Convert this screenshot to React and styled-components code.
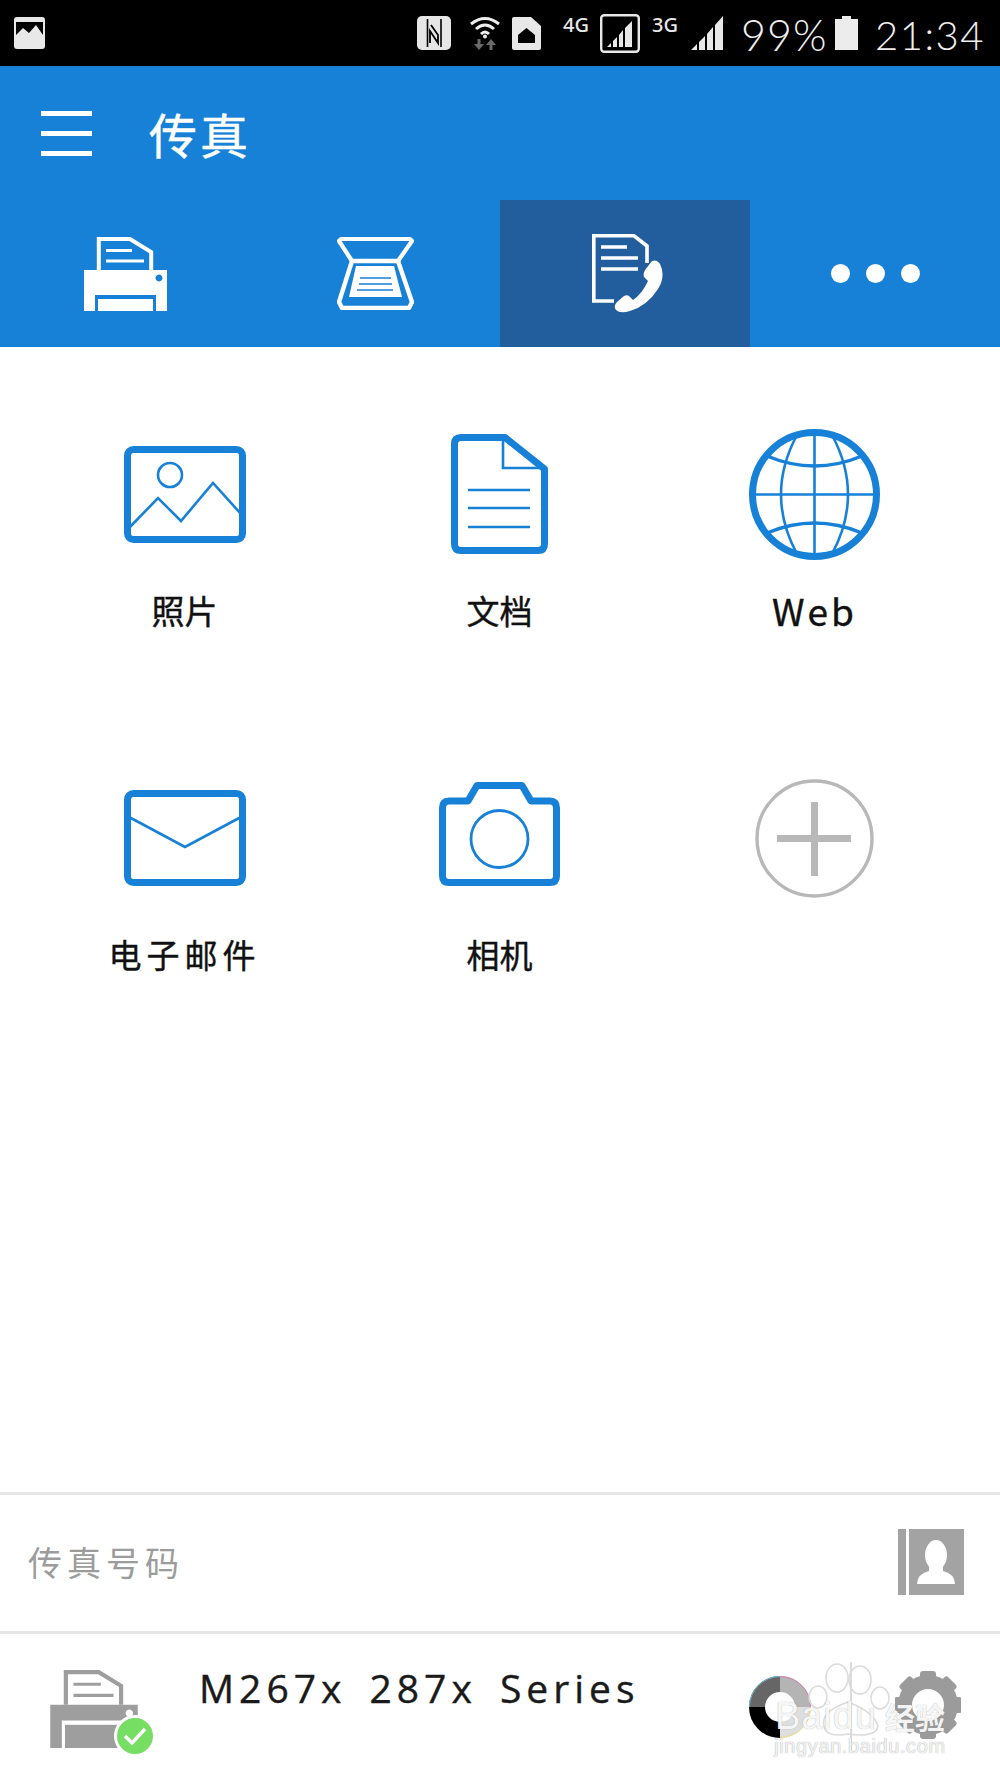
import React from "react";
import styled, { createGlobalStyle } from "styled-components";

const BLUE = "#1781d8";
const CJK = `"Noto Sans CJK SC", "Noto Sans", sans-serif`;

const Global = createGlobalStyle`
  html, body { margin: 0; padding: 0; background: #fff; }
  * { box-sizing: border-box; }
`;

const Page = styled.div`
  width: 1000px;
  height: 1778px;
  display: flex;
  flex-direction: column;
  background: #fff;
  overflow: hidden;
  position: relative;
  font-family: ${CJK};
`;

/* ---------- status bar ---------- */
const StatusBar = styled.div`
  height: 66px;
  flex: none;
  background: #000;
  display: flex;
  align-items: center;
  padding: 0 15px 0 14px;
`;
const StatusSpacer = styled.div`
  flex: 1;
`;
const StatusSlot = styled.div`
  flex: none;
  display: flex;
  margin-left: ${(p) => p.$ml || 0}px;
`;
const NetText = styled.span`
  flex: none;
  width: ${(p) => p.$w}px;
  margin-left: ${(p) => p.$ml}px;
  margin-bottom: 16px;
  font: 500 20px/20px "Noto Sans", sans-serif;
  color: #e8e8e8;
  white-space: nowrap;
`;
const ClockText = styled.span`
  flex: none;
  width: ${(p) => p.$w}px;
  margin-left: ${(p) => p.$ml}px;
  margin-top: 4px;
  font: 300 ${(p) => p.$fs}px/44px Lato, sans-serif;
  letter-spacing: ${(p) => p.$ls}px;
  color: #efefef;
  white-space: nowrap;
`;

/* ---------- header ---------- */
const TitleBar = styled.header`
  height: 134px;
  flex: none;
  background: ${BLUE};
  display: flex;
  align-items: center;
  padding-left: 41px;
`;
const Burger = styled.div`
  width: 51px;
  height: 45px;
  display: flex;
  flex-direction: column;
  justify-content: space-between;
`;
const BurgerLine = styled.span`
  display: block;
  height: 5px;
  background: #fff;
`;
const Title = styled.h1`
  margin: 0 0 0 57px;
  font: 400 48px/60px ${CJK};
  letter-spacing: 3px;
  color: #fff;
  -webkit-text-stroke: 0.5px #fff;
`;
const Tabs = styled.nav`
  height: 147px;
  flex: none;
  background: ${BLUE};
  display: grid;
  grid-template-columns: repeat(4, 250px);
`;
const Tab = styled.div`
  display: flex;
  align-items: center;
  justify-content: center;
  padding: 0 0 ${(p) => p.$pb || 0}px ${(p) => p.$pl || 0}px;
  background: ${(p) => (p.$active ? "#225e9e" : "transparent")};
`;
const Dots = styled.div`
  display: flex;
  gap: 16px;
`;
const Dot = styled.span`
  width: 19px;
  height: 19px;
  border-radius: 50%;
  background: #fff;
`;

/* ---------- function grid ---------- */
const Main = styled.main`
  flex: 1;
  padding: 82px 28px 0 27px;
`;
const Grid = styled.div`
  display: grid;
  grid-template-columns: repeat(3, 315px);
  grid-auto-rows: 344px;
`;
const Cell = styled.div`
  display: flex;
  flex-direction: column;
  align-items: center;
`;
const IconBox = styled.div`
  height: 130px;
  display: flex;
  align-items: center;
  justify-content: center;
`;
const Label = styled.div`
  margin-top: 30px;
  font: 400 ${(p) => p.$fs || 33}px/42px ${CJK};
  letter-spacing: ${(p) => p.$ls || 0}px;
  color: #111;
  white-space: nowrap;
  -webkit-text-stroke: 0.4px #111;
`;

/* ---------- bottom rows ---------- */
const FaxRow = styled.section`
  height: 139px;
  flex: none;
  border-top: 3px solid #e6e6e6;
  display: flex;
  align-items: center;
  justify-content: space-between;
  padding: 0 36px 2px 28px;
`;
const FaxLabel = styled.div`
  font: 400 34px/46px ${CJK};
  letter-spacing: 5px;
  color: #9c9c9c;
`;
const DeviceRow = styled.section`
  height: 147px;
  flex: none;
  border-top: 3px solid #e6e6e6;
  display: flex;
  align-items: flex-start;
  padding: 36px 39px 0 50px;
`;
const PrinterWrap = styled.div`
  position: relative;
  width: 88px;
  height: 78px;
  flex: none;
`;
const CheckBadge = styled.div`
  position: absolute;
  left: 64px;
  top: 45px;
  width: 42px;
  height: 42px;
  border-radius: 50%;
  background: #76de62;
  border: 3px solid #fff;
  display: flex;
  align-items: center;
  justify-content: center;
`;
const DeviceName = styled.div`
  flex: 1;
  margin: -7px 0 0 61px;
  font: 400 39px/50px "Open Sans", sans-serif;
  letter-spacing: 5px;
  word-spacing: 8px;
  color: #1a1a1a;
  white-space: nowrap;
  -webkit-text-stroke: 0.4px #1a1a1a;
`;
const InkSlot = styled.div`
  flex: none;
  margin: 6px 84px 0 0;
  display: flex;
`;
const GearSlot = styled.div`
  flex: none;
  margin-top: 1px;
  display: flex;
`;

/* ---------- watermark over the corner ---------- */
const Watermark = styled.div`
  position: absolute;
  left: 760px;
  top: 1660px;
  width: 200px;
  height: 100px;
  display: flex;
  flex-direction: column;
  align-items: center;
`;
const PawArt = styled.svg`
  position: absolute;
  left: 0;
  top: 0;
`;
const MarkLine = styled.div`
  position: relative;
  margin-top: 36px;
  display: flex;
  align-items: center;
  gap: 8px;
  color: rgba(255, 255, 255, 0.92);
  text-shadow: 0 0 1px rgba(120, 120, 120, 0.7);
`;
const MarkBaidu = styled.span`
  font: 400 38px/40px "Liberation Sans", sans-serif;
  letter-spacing: 1px;
`;
const MarkJy = styled.span`
  font: 700 30px/40px ${CJK};
`;
const MarkUrl = styled.div`
  position: relative;
  margin-top: -1px;
  font: 400 20px/22px "Liberation Sans", sans-serif;
  letter-spacing: 0.6px;
  color: rgba(255, 255, 255, 0.9);
  text-shadow: 0 0 1px rgba(110, 110, 110, 0.8);
`;

/* ---------- drawings ---------- */
const GalleryGlyph = () => (
  <svg width="31" height="32" viewBox="0 0 31 32">
    <rect x="0" y="0" width="31" height="32" rx="3" fill="#e8e8e8" />
    <rect x="2" y="5" width="27" height="13" fill="#000" />
    <path d="M2 18 L9 11 L15 16 L22 8 L29 18Z" fill="#e8e8e8" />
  </svg>
);
const NfcGlyph = () => (
  <svg width="34" height="34" viewBox="0 0 34 34">
    <rect width="34" height="34" rx="5" fill="#e6e6e6" />
    <path d="M10.5 3 V31 M24 3 V31" stroke="#000" strokeWidth="1.6" fill="none" />
    <path d="M14 9 L21 19 V27 L13 15 V27" stroke="#000" strokeWidth="1.8" fill="none" />
  </svg>
);
const WifiGlyph = () => (
  <svg width="30" height="34" viewBox="0 0 30 34">
    <path d="M1 8 Q15 -3 29 8" stroke="#eee" strokeWidth="3" fill="none" />
    <path d="M6 13 Q15 5 24 13" stroke="#eee" strokeWidth="3" fill="none" />
    <path d="M11 18 Q15 14 19 18" stroke="#eee" strokeWidth="3" fill="none" />
    <circle cx="15" cy="20.5" r="2" fill="#eee" />
    <path d="M9 34 L4 28 H7.5 V23 H10.5 V28 H14Z" fill="#6a6a6a" />
    <path d="M21 23 L26 29 H22.5 V34 H19.5 V29 H16Z" fill="#6a6a6a" />
  </svg>
);
const SimGlyph = () => (
  <svg width="29" height="33" viewBox="0 0 29 33">
    <path d="M2 0 H19 L29 9 V31 Q29 33 27 33 H2 Q0 33 0 31 V2 Q0 0 2 0Z" fill="#e8e8e8" />
    <path d="M14.5 11 L23 18 V26 H6 V18Z" fill="#000" />
  </svg>
);
const BarsFill = () => (
  <svg width="34" height="34" viewBox="0 0 34 34">
    <path d="M1 34 L7 28 V34Z M9 34 V26 L15 20 V34Z M17 34 V18 L23 11 V34Z M25 34 V9 L33 0 V34Z" fill="#e8e8e8" />
  </svg>
);
const SignalBox = () => (
  <svg width="40" height="39" viewBox="0 0 40 39">
    <rect x="1.2" y="1.2" width="37.6" height="36.6" rx="3" fill="none" stroke="#e8e8e8" strokeWidth="2.4" />
    <path d="M7 33 L11 29 V33Z M13 33 V27 L17 23 V33Z M19 33 V21 L23 16 V33Z M25 33 V14 L32 7 V33Z" fill="#e8e8e8" />
  </svg>
);
const Battery = () => (
  <svg width="23" height="34" viewBox="0 0 23 34">
    <path d="M7 0 H16 V3 H23 V34 H0 V3 H7Z" fill="#ececec" />
  </svg>
);

const Printer = ({ color, w, h, notch = 58, sheet = 62 }) => (
  <svg width={w} height={h} viewBox="0 0 83 74">
    <path d="M14.8 33 V2 H46 L67.2 15 V33" fill="none" stroke={color} strokeWidth="4" />
    <path d="M22 13.5 H48 M22 24 H60" stroke={color} strokeWidth="3" />
    <path fillRule="evenodd" d={`M0 33 H83 V74 H72 V${notch} H11 V74 H0Z M75 37.5 a3.5 3.5 0 1 0 0.01 0Z`} fill={color} />
    <rect x="14" y={sheet} width="55" height={74 - sheet} fill={color} />
  </svg>
);
const Scanner = () => (
  <svg width="77" height="74" viewBox="0 0 77 74">
    <path d="M4 3 H73 L75 5 L61 25 H15 L2 5Z" fill="none" stroke="#fff" strokeWidth="4.2" strokeLinejoin="round" />
    <path d="M15 25 H61 L75 66 L72 72 H5 L2 66Z" fill="none" stroke="#fff" strokeWidth="4.4" strokeLinejoin="round" />
    <path d="M19 30 H57 L65 61 H12Z" fill="#fff" />
    <path d="M23 42 H54 M22 48 H55 M20 54 H56" stroke={BLUE} strokeWidth="1.7" />
  </svg>
);
const FaxDoc = () => (
  <svg width="71" height="79" viewBox="0 0 71 79">
    <path d="M22 67 H1.8 V1.8 H42 L55 12 V29" fill="none" stroke="#fff" strokeWidth="3.6" />
    <path d="M9 13 H35 M9 24 H46 M9 35 H46" stroke="#fff" strokeWidth="3.5" />
    <path d="M60 27 Q65 25 68 30 Q74 42 66 55 Q55 72 38 77 Q28 80 24 76 Q21 72 25 68 L32 62 Q36 60 38 63 L41 66 Q50 60 56 47 L52 43 Q51 40 53 36Z" fill="#fff" />
  </svg>
);

const PhotoIcon = () => (
  <svg width="122" height="97" viewBox="0 0 122 97">
    <rect x="3.5" y="3.5" width="115" height="90" rx="6" fill="none" stroke={BLUE} strokeWidth="7" />
    <circle cx="46" cy="29" r="12" fill="none" stroke={BLUE} strokeWidth="2.6" />
    <path d="M5 82 L34 52 L57 75 L89 37 L117 68" fill="none" stroke={BLUE} strokeWidth="2.6" />
  </svg>
);
const DocIcon = () => (
  <svg width="97" height="120" viewBox="0 0 97 120">
    <path d="M10 3.5 H54 L93.5 35 V110 Q93.5 116.5 87 116.5 H10 Q3.5 116.5 3.5 110 V10 Q3.5 3.5 10 3.5Z" fill="none" stroke={BLUE} strokeWidth="7" strokeLinejoin="round" />
    <path d="M52 4 V34 H92" fill="none" stroke={BLUE} strokeWidth="2.6" />
    <path d="M17 56 H79 M17 74 H79 M17 93 H79" stroke={BLUE} strokeWidth="2.6" />
  </svg>
);
const GlobeIcon = () => (
  <svg width="131" height="131" viewBox="0 0 131 131">
    <circle cx="65.5" cy="65.5" r="62" fill="none" stroke={BLUE} strokeWidth="7" />
    <g fill="none" stroke={BLUE} strokeWidth="2.6">
      <path d="M65.5 4 V127 M4 65.5 H127" />
      <path d="M48 6 Q16 65.5 48 125 M83 6 Q115 65.5 83 125" />
      <path d="M18 27 Q65.5 47 113 27 M18 104 Q65.5 84 113 104" strokeWidth="3.4" />
    </g>
  </svg>
);
const MailIcon = () => (
  <svg width="122" height="96" viewBox="0 0 122 96">
    <rect x="3.5" y="3.5" width="115" height="89" rx="6" fill="none" stroke={BLUE} strokeWidth="7" />
    <path d="M5 27 L61 57 L117 27" fill="none" stroke={BLUE} strokeWidth="2.6" />
  </svg>
);
const CameraIcon = () => (
  <svg width="121" height="112" viewBox="0 0 121 112">
    <path d="M38 3.5 H83 L92 19 H111 Q117.5 19 117.5 26 V94 Q117.5 100.5 111 100.5 H10 Q3.5 100.5 3.5 94 V26 Q3.5 19 10 19 H29Z" fill="none" stroke={BLUE} strokeWidth="7" strokeLinejoin="round" />
    <circle cx="60.5" cy="57" r="28.5" fill="none" stroke={BLUE} strokeWidth="2.8" />
  </svg>
);
const AddIcon = () => (
  <svg width="119" height="119" viewBox="0 0 119 119">
    <circle cx="59.5" cy="59.5" r="57.5" fill="none" stroke="#b8b8b8" strokeWidth="3.4" />
    <path d="M22 59.5 H96 M59.5 23 V97" stroke="#b8b8b8" strokeWidth="7" />
  </svg>
);
const ContactIcon = () => (
  <svg width="66" height="66" viewBox="0 0 66 66">
    <rect x="0" y="0" width="8" height="66" fill="#a3a3a3" />
    <rect x="11" y="0" width="55" height="66" fill="#a3a3a3" />
    <ellipse cx="38" cy="26" rx="11" ry="15" fill="#fff" />
    <path d="M31 36 V42 Q19 45 19 55 H57 Q57 45 45 42 V36Z" fill="#fff" />
  </svg>
);
const InkIcon = () => (
  <svg width="62" height="62" viewBox="0 0 62 62">
    <g fill="none" strokeWidth="16">
      <path d="M8 31 A23 23 0 0 1 31 8" stroke="#666" />
      <path d="M31 8 A23 23 0 0 1 54 31" stroke="#b4b4b4" />
      <path d="M54 31 A23 23 0 0 1 31 54" stroke="#dedede" />
      <path d="M31 54 A23 23 0 0 1 8 31" stroke="#000" />
    </g>
    <g fill="none" strokeWidth="1">
      <path d="M0.5 31 A30.5 30.5 0 0 1 31 0.5" stroke="#6ab7d0" />
      <path d="M31 0.5 A30.5 30.5 0 0 1 61.5 31" stroke="#d77fb5" />
      <path d="M61.5 31 A30.5 30.5 0 0 1 31 61.5" stroke="#ecdf7c" />
    </g>
  </svg>
);
const GearIcon = () => (
  <svg width="66" height="68" viewBox="0 0 66 68">
    <g fill="#9b9b9b">
      {[0, 45, 90, 135, 180, 225, 270, 315].map((a) => (
        <rect key={a} x="25" y="0" width="16" height="16" rx="3" transform={`rotate(${a} 33 34)`} />
      ))}
    </g>
    <circle cx="33" cy="34" r="23" fill="none" stroke="#9b9b9b" strokeWidth="14" />
  </svg>
);

const items = [
  { label: "照片", icon: <PhotoIcon /> },
  { label: "文档", icon: <DocIcon /> },
  { label: "Web", icon: <GlobeIcon />, ls: 3, fs: 37 },
  { label: "电子邮件", icon: <MailIcon />, ls: 5 },
  { label: "相机", icon: <CameraIcon /> },
  { label: "", icon: <AddIcon /> },
];

export default function App() {
  return (
    <Page>
      <Global />
      <StatusBar>
        <StatusSlot><GalleryGlyph /></StatusSlot>
        <StatusSpacer />
        <StatusSlot><NfcGlyph /></StatusSlot>
        <StatusSlot $ml={19}><WifiGlyph /></StatusSlot>
        <StatusSlot $ml={12}><SimGlyph /></StatusSlot>
        <NetText $w={27} $ml={22}>4G</NetText>
        <StatusSlot $ml={10}><SignalBox /></StatusSlot>
        <NetText $w={25} $ml={12}>3G</NetText>
        <StatusSlot $ml={13}><BarsFill /></StatusSlot>
        <ClockText $w={84} $ml={17} $ls={1} $fs={43}>99%</ClockText>
        <StatusSlot $ml={10}><Battery /></StatusSlot>
        <ClockText $w={110} $ml={17} $ls={1.5} $fs={40}>21:34</ClockText>
      </StatusBar>

      <TitleBar>
        <Burger>
          <BurgerLine />
          <BurgerLine />
          <BurgerLine />
        </Burger>
        <Title>传真</Title>
      </TitleBar>

      <Tabs>
        <Tab><Printer color="#fff" w={83} h={74} /></Tab>
        <Tab $pb={2}><Scanner /></Tab>
        <Tab $active $pl={4}><FaxDoc /></Tab>
        <Tab><Dots><Dot /><Dot /><Dot /></Dots></Tab>
      </Tabs>

      <Main>
        <Grid>
          {items.map((it, i) => (
            <Cell key={i}>
              <IconBox>{it.icon}</IconBox>
              {it.label && <Label $ls={it.ls} $fs={it.fs}>{it.label}</Label>}
            </Cell>
          ))}
        </Grid>
      </Main>

      <FaxRow>
        <FaxLabel>传真号码</FaxLabel>
        <ContactIcon />
      </FaxRow>

      <DeviceRow>
        <PrinterWrap>
          <Printer color="#9e9e9e" w={88} h={78} notch={48} sheet={52} />
          <CheckBadge>
            <svg width="24" height="20" viewBox="0 0 24 20">
              <path d="M2 10 L9 17 L22 3" fill="none" stroke="#fff" strokeWidth="3.4" />
            </svg>
          </CheckBadge>
        </PrinterWrap>
        <DeviceName>M267x 287x Series</DeviceName>
        <InkSlot><InkIcon /></InkSlot>
        <GearSlot><GearIcon /></GearSlot>
      </DeviceRow>

      <Watermark>
        <PawArt width="200" height="100" viewBox="0 0 200 100">
          <path d="M91 2 V92" stroke="#cfcfcf" strokeWidth="1.5" />
          <g fill="none" stroke="#dcdcdc" strokeWidth="1.6" transform="translate(-4 0)">
            <ellipse cx="81" cy="18" rx="11" ry="14" />
            <ellipse cx="104" cy="20" rx="11" ry="14" />
            <ellipse cx="62" cy="37" rx="9" ry="11" />
            <ellipse cx="124" cy="38" rx="9" ry="11" />
            <path d="M68 66 Q64 52 92 42 Q118 52 122 66 Q120 78 92 74 Q70 78 68 66Z" />
          </g>
        </PawArt>
        <MarkLine>
          <MarkBaidu>Baidu</MarkBaidu>
          <MarkJy>经验</MarkJy>
        </MarkLine>
        <MarkUrl>jingyan.baidu.com</MarkUrl>
      </Watermark>
    </Page>
  );
}
